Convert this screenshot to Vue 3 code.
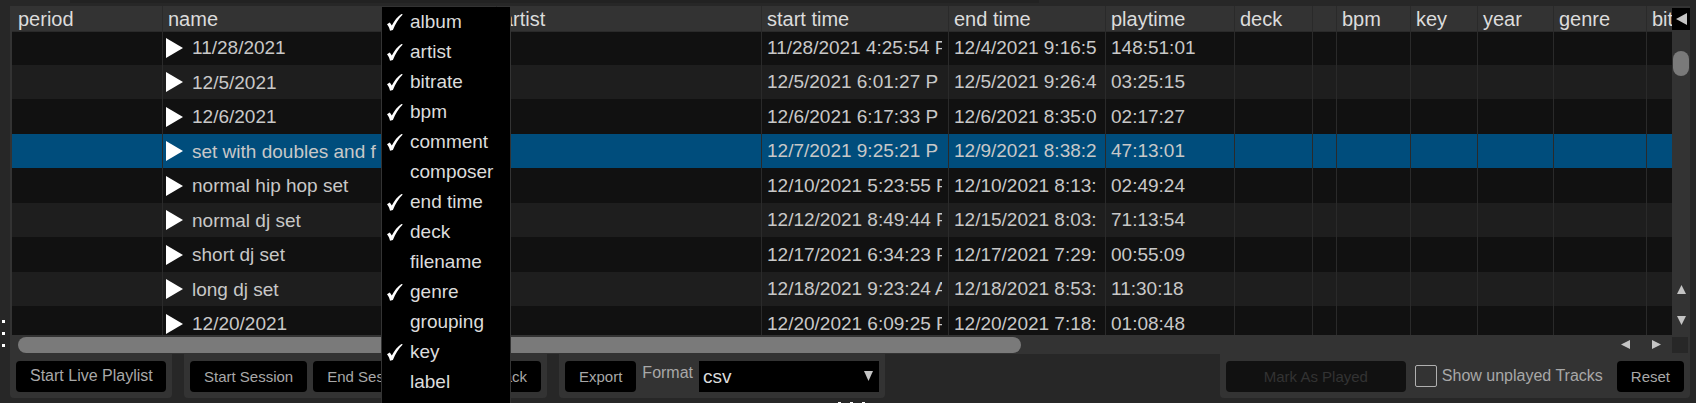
<script setup>
import { ref } from 'vue'

const columns = [
  { label: 'period', cls: 'c-period' },
  { label: 'name', cls: 'c-name' },
  { label: 'artist', cls: 'c-artist' },
  { label: 'start time', cls: 'c-start' },
  { label: 'end time', cls: 'c-end' },
  { label: 'playtime', cls: 'c-play' },
  { label: 'deck', cls: 'c-deck' },
  { label: '', cls: 'c-blank' },
  { label: 'bpm', cls: 'c-bpm' },
  { label: 'key', cls: 'c-key' },
  { label: 'year', cls: 'c-year' },
  { label: 'genre', cls: 'c-genre' },
  { label: 'bit', cls: 'c-bit' },
]

const rows = [
  ['11/28/2021', '11/28/2021 4:25:54 P', '12/4/2021 9:16:5', '148:51:01'],
  ['12/5/2021', '12/5/2021 6:01:27 P', '12/5/2021 9:26:4', '03:25:15'],
  ['12/6/2021', '12/6/2021 6:17:33 P', '12/6/2021 8:35:0', '02:17:27'],
  ['set with doubles and f', '12/7/2021 9:25:21 P', '12/9/2021 8:38:2', '47:13:01'],
  ['normal hip hop set', '12/10/2021 5:23:55 P', '12/10/2021 8:13:', '02:49:24'],
  ['normal dj set', '12/12/2021 8:49:44 P', '12/15/2021 8:03:', '71:13:54'],
  ['short dj set', '12/17/2021 6:34:23 P', '12/17/2021 7:29:', '00:55:09'],
  ['long dj set', '12/18/2021 9:23:24 A', '12/18/2021 8:53:', '11:30:18'],
  ['12/20/2021', '12/20/2021 6:09:25 P', '12/20/2021 7:18:', '01:08:48'],
]
const selected = ref(3)

const menu = ref([
  { label: 'album', on: true },
  { label: 'artist', on: true },
  { label: 'bitrate', on: true },
  { label: 'bpm', on: true },
  { label: 'comment', on: true },
  { label: 'composer', on: false },
  { label: 'end time', on: true },
  { label: 'deck', on: true },
  { label: 'filename', on: false },
  { label: 'genre', on: true },
  { label: 'grouping', on: false },
  { label: 'key', on: true },
  { label: 'label', on: false },
  { label: 'location', on: true },
])
</script>

<template>
  <main class="app">
    <div class="top-strip"></div>
    <div class="grip grip-left"><i></i><i></i><i></i></div>
    <div class="grip grip-bottom"><i></i><i></i><i></i></div>

    <section class="panel">
      <div class="grid-area">
        <div class="table-wrap">
          <table>
            <colgroup>
              <col v-for="c in columns" :key="c.cls" :class="c.cls" />
            </colgroup>
            <thead>
              <tr>
                <th v-for="c in columns" :key="c.cls" scope="col">{{ c.label }}</th>
              </tr>
            </thead>
            <tbody>
              <tr v-for="(r, i) in rows" :key="i" :class="{ selected: i === selected }" @click="selected = i">
                <td></td>
                <td class="name">
                  <svg class="play" viewBox="0 0 17 20" aria-hidden="true"><path d="M0 0 17 10 0 20z" /></svg><span>{{ r[0] }}</span>
                </td>
                <td></td>
                <td><div class="clip">{{ r[1] }}</div></td>
                <td><div class="clip">{{ r[2] }}</div></td>
                <td><div class="clip">{{ r[3] }}</div></td>
                <td v-for="n in 7" :key="n"></td>
              </tr>
            </tbody>
          </table>
        </div>
        <div class="vbar">
          <button class="corner-btn" aria-label="Choose columns">
            <svg width="11" height="12" viewBox="0 0 11 12"><path d="M11 0v12L0 6z" /></svg>
          </button>
          <div class="vthumb"></div>
          <div class="varrows">
            <button aria-label="Scroll up"><svg width="9" height="9" viewBox="0 0 10 10"><path d="M5 0l5 10H0z" /></svg></button>
            <button aria-label="Scroll down"><svg width="9" height="9" viewBox="0 0 10 10"><path d="M0 0h10L5 10z" /></svg></button>
          </div>
        </div>
      </div>

      <div class="hbar">
        <div class="htrack"><div class="hthumb"></div></div>
        <div class="harrows">
          <button aria-label="Scroll left"><svg width="9" height="9" viewBox="0 0 10 10"><path d="M10 0v10L0 5z" /></svg></button>
          <button aria-label="Scroll right"><svg width="9" height="9" viewBox="0 0 10 10"><path d="M0 0l10 5-10 5z" /></svg></button>
        </div>
        <div class="hcorner"></div>
      </div>

      <div class="toolbar">
        <div class="group">
          <button class="btn live">Start Live Playlist</button>
        </div>
        <div class="group session">
          <button class="btn">Start Session</button>
          <button class="btn">End Session</button>
          <button class="btn grow">Delete Track</button>
        </div>
        <div class="group">
          <button class="btn">Export</button>
          <label class="format" for="format">Format</label>
          <div class="select">
            <select id="format"><option>csv</option><option>txt</option></select>
            <svg width="9" height="10" viewBox="0 0 10 10" preserveAspectRatio="none" aria-hidden="true"><path d="M0 0h10L5 10z" /></svg>
          </div>
        </div>
        <div class="group right">
          <button class="btn mark" disabled>Mark As Played</button>
          <label class="unplayed"><input type="checkbox" />Show unplayed Tracks</label>
          <button class="btn">Reset</button>
        </div>
      </div>
    </section>

    <div class="menu" role="menu">
      <button
        v-for="m in menu"
        :key="m.label"
        role="menuitemcheckbox"
        :aria-checked="m.on"
        @click="m.on = !m.on"
      >
        <span class="tick">
          <svg v-if="m.on" width="16" height="17" viewBox="0 0 16 17"><path d="M0 10.200 2.800 8.600 4.800 11.600C7.500 6.500 10.500 2.500 14.400 0L15.800.6C11.500 4.800 8.400 9.900 5.900 16L3 16.700C2.500 14.200 1.500 12 0 10.200z" /></svg>
        </span>
        {{ m.label }}
      </button>
    </div>
  </main>
</template>

<style>
html,
body {
  background: #272727;
}
body {
  margin: 0;
  height: 100vh;
  overflow: hidden;
}
</style>

<style scoped>
.app {
  position: relative;
  height: 100vh;
  overflow: hidden;
  box-sizing: border-box;
  padding: 0 6px 0 10px;
  background: #272727;
  font-family: 'Liberation Sans', Arial, sans-serif;
  font-size: 19px;
  color: #c8c8c8;
}
button,
select {
  font: inherit;
  color: inherit;
  border: 0;
  margin: 0;
  padding: 0;
  background: none;
}
svg {
  display: block;
  fill: #c4c4c4;
}
.top-strip {
  height: 3px;
  margin: 0 651px 3px 60px;
  background: #222;
}
.grip {
  position: absolute;
  display: flex;
  gap: 9px;
}
.grip i {
  width: 3px;
  height: 3px;
  background: #fff;
}
.grip-left {
  left: 2px;
  top: 320px;
  flex-direction: column;
}
.grip-bottom {
  left: 838px;
  bottom: -2px;
}
.panel {
  display: flex;
  flex-direction: column;
}
.grid-area {
  display: flex;
  height: 329px;
  background: #333;
  padding-left: 2px;
}
.table-wrap {
  flex: 1;
  min-width: 0;
  overflow: hidden;
}
table {
  width: 100%;
  table-layout: fixed;
  border-collapse: separate;
  border-spacing: 0;
}
.c-period { width: 150px; }
.c-artist { width: 265px; }
.c-start { width: 187px; }
.c-end { width: 157px; }
.c-play { width: 129px; }
.c-deck { width: 78px; }
.c-blank { width: 24px; }
.c-bpm { width: 74px; }
.c-key { width: 67px; }
.c-year { width: 76px; }
.c-genre { width: 93px; }
.c-bit { width: 26px; }
th,
td {
  box-sizing: border-box;
  padding: 0 6px;
  text-align: left;
  white-space: nowrap;
  overflow: hidden;
  line-height: 24px;
}
th + th,
td + td {
  border-left: 1px solid #2a2a2a;
  padding-left: 5px;
}
th {
  height: 26px;
  font-size: 20px;
  font-weight: 400;
  color: #dcdcdc;
  background: #333;
  border-bottom: 1px solid #2a2a2a;
}
th + th {
  padding-right: 0;
}
td {
  height: 35px;
  background: #111;
}
tr:nth-child(even) td {
  height: 34px;
  background: #1e1e1e;
}
tr:first-child td {
  height: 33px;
  padding-bottom: 2px;
}
tr.selected td {
  background: #004d7c;
}
.clip {
  overflow: hidden;
}
.name span {
  vertical-align: middle;
}
td.name {
  padding-left: 3px;
}
.play {
  display: inline-block;
  vertical-align: middle;
  width: 17px;
  height: 20px;
  margin-right: 9px;
  fill: #fff;
}
.vbar {
  display: flex;
  flex-direction: column;
  width: 18px;
}
.corner-btn {
  display: flex;
  align-items: center;
  justify-content: center;
  height: 22px;
  margin: 2px 0 21px;
  background: #000;
}
.vthumb {
  height: 25px;
  margin: 0 1px;
  border-radius: 8px;
  background: #7a7a7a;
}
.varrows {
  display: flex;
  flex-direction: column;
  align-items: center;
  gap: 22px;
  margin-top: auto;
  padding-bottom: 10px;
}
.hbar {
  display: flex;
  align-items: center;
  height: 19px;
  background: #333;
}
.htrack {
  flex: 1;
  padding-left: 8px;
}
.hthumb {
  width: 62.6%;
  height: 16px;
  border-radius: 8px;
  background: #7a7a7a;
}
.harrows {
  display: flex;
  gap: 22px;
  margin-right: 11px;
}
.hcorner {
  width: 16px;
  height: 16px;
  margin-right: 2px;
  background: #272727;
}
.toolbar {
  display: flex;
  gap: 12px;
  font-size: 15px;
  color: #a8a8a8;
}
.group {
  display: flex;
  align-items: center;
  gap: 6px;
  height: 44px;
  box-sizing: border-box;
  padding: 0 6px;
  background: #333;
  border-radius: 0 0 4px 4px;
}
.session {
  width: 363px;
}
.right {
  margin-left: auto;
}
.btn {
  height: 31px;
  padding: 0 14px;
  border-radius: 4px;
  background: #000;
  white-space: nowrap;
}
.live {
  width: 150px;
  font-size: 16px;
}
.grow {
  flex: 1;
  padding-left: 8px;
  text-align: right;
}
.mark {
  width: 180px;
  background: #111;
  color: #333;
}
.format {
  padding: 0 0 6px;
  font-size: 16px;
}
.select {
  position: relative;
  width: 180px;
}
.select select {
  appearance: none;
  display: block;
  width: 100%;
  height: 31px;
  padding: 0 24px 0 4px;
  background: #000;
  color: #dcdcdc;
  font-size: 19px;
}
.select svg {
  position: absolute;
  right: 6px;
  top: 10px;
  pointer-events: none;
}
.unplayed {
  display: flex;
  align-items: center;
  gap: 5px;
  margin: 0 8px 0 3px;
  font-size: 16px;
}
.unplayed input {
  appearance: none;
  width: 22px;
  height: 22px;
  margin: 0;
  border: 1px solid #b0b0b0;
  border-radius: 2px;
}
.menu {
  position: absolute;
  left: 381px;
  top: 7px;
  bottom: 0;
  width: 130px;
  box-sizing: border-box;
  overflow: hidden;
  background: #000;
  border: solid #333;
  border-width: 0 1px;
  font-size: 19px;
  color: #dcdcdc;
}
.menu button {
  display: flex;
  align-items: center;
  width: 100%;
  height: 30px;
  padding-left: 5px;
}
.tick {
  width: 23px;
}
.tick svg {
  fill: #fff;
}
</style>
